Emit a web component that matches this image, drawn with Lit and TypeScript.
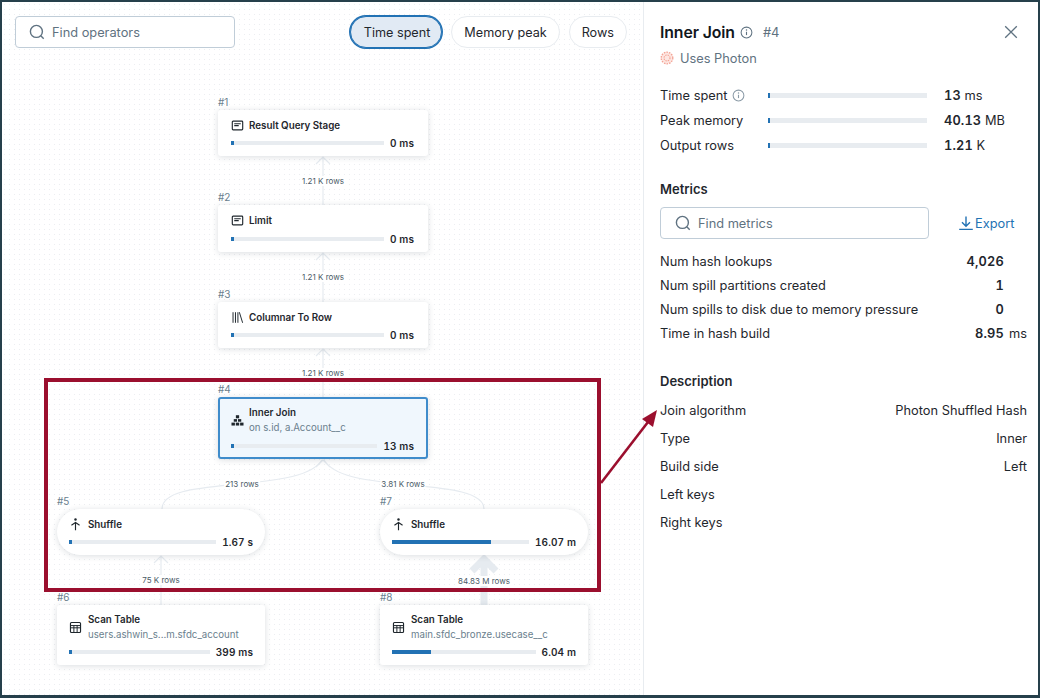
import { LitElement, html, css, svg } from "lit";
import { customElement } from "lit/decorators.js";

type Kind = "doc" | "cols" | "join" | "run" | "table";
interface OpNode { id: number; x: number; y: number; w: number; h: number; title: string; sub?: string; value: string; fill: number; icon: Kind; pill?: boolean; sel?: boolean; low?: boolean; }

const nodes: OpNode[] = [
  { id: 1, x: 218, y: 110, w: 210, h: 46, title: "Result Query Stage", value: "0 ms", fill: 2, icon: "doc" },
  { id: 2, x: 218, y: 205, w: 210, h: 47, title: "Limit", value: "0 ms", fill: 2, icon: "doc" },
  { id: 3, x: 218, y: 302, w: 210, h: 46, title: "Columnar To Row", value: "0 ms", fill: 2, icon: "cols" },
  { id: 4, x: 218, y: 397, w: 210, h: 62, title: "Inner Join", sub: "on s.id, a.Account__c", value: "13 ms", fill: 2, icon: "join", sel: true },
  { id: 5, x: 57, y: 509, w: 208, h: 46, title: "Shuffle", value: "1.67 s", fill: 2, icon: "run", pill: true, low: true },
  { id: 7, x: 380, y: 509, w: 208, h: 46, title: "Shuffle", value: "16.07 m", fill: 72.5, icon: "run", pill: true, low: true },
  { id: 6, x: 57, y: 605, w: 208, h: 60, title: "Scan Table", sub: "users.ashwin_s...m.sfdc_account", value: "399 ms", fill: 2, icon: "table", low: true },
  { id: 8, x: 380, y: 605, w: 208, h: 60, title: "Scan Table", sub: "main.sfdc_bronze.usecase__c", value: "6.04 m", fill: 27, icon: "table", low: true },
];

const edgeLabels = [
  { t: "1.21 K rows", x: 323, y: 181 },
  { t: "1.21 K rows", x: 323, y: 277 },
  { t: "1.21 K rows", x: 323, y: 373 },
  { t: "213 rows", x: 242, y: 484 },
  { t: "3.81 K rows", x: 403, y: 484 },
  { t: "75 K rows", x: 161, y: 580 },
  { t: "84.83 M rows", x: 484, y: 581 },
];

const icons: Record<Kind, unknown> = {
  doc: svg`<rect x="1.6" y="2.6" width="12.8" height="10.8" rx="1" fill="none" stroke="currentColor" stroke-width="1.4"/><path d="M4 5.8h8M4 8.2h5.5" stroke="currentColor" stroke-width="1.4" fill="none"/>`,
  cols: svg`<path d="M2.5 1.5v13M5.5 1.5v13M8.5 1.5v13M10.3 1.5l4 13" stroke="currentColor" stroke-width="1.2" fill="none"/>`,
  join: svg`<rect x="6" y="1.5" width="4" height="3.8" fill="currentColor"/><rect x="3.4" y="6.3" width="4" height="3.2" fill="currentColor"/><rect x="8.6" y="6.3" width="4" height="3.2" fill="currentColor"/><rect x="0.6" y="10.6" width="4.2" height="3.6" fill="currentColor"/><rect x="5.9" y="10.6" width="4.2" height="3.6" fill="currentColor"/><rect x="11.2" y="10.6" width="4.2" height="3.6" fill="currentColor"/>`,
  run: svg`<circle cx="8" cy="1.9" r="1.5" fill="currentColor"/><path d="M8 15V5.6M3 8.8l5-3.2 5 3.2" stroke="currentColor" stroke-width="1.4" fill="none"/>`,
  table: svg`<rect x="1.8" y="1.8" width="12.4" height="12.4" rx="1.2" fill="none" stroke="currentColor" stroke-width="1.4"/><path d="M2 5.6h12M2 8.4h12M6 5.6v8.4M10 5.6v8.4" stroke="currentColor" stroke-width="1.2" fill="none"/>`,
};

const searchIcon = html`<svg class="search" viewBox="0 0 16 16" width="16" height="16"><circle cx="7.4" cy="7.4" r="6" fill="none" stroke="#5f7281" stroke-width="1.4"/><path d="M11.8 11.8l2.9 2.9" stroke="#5f7281" stroke-width="1.4" fill="none"/></svg>`;
const infoIcon = (c: string) => html`<svg viewBox="0 0 14 14" width="13" height="13"><circle cx="7" cy="7" r="5.8" fill="none" stroke=${c} stroke-width="1.1"/><path d="M7 6.2v3.6" stroke=${c} stroke-width="1.2"/><circle cx="7" cy="4.3" r=".8" fill=${c}/></svg>`;

@customElement("op-node")
class OpNodeEl extends LitElement {
  static properties = { node: { attribute: false } };
  node!: OpNode;
  static styles = css`
    :host { display: contents; }
    .num { position: absolute; font-size: 10px; line-height: 12px; color: #6b7f8e; }
    .card { position: absolute; box-sizing: border-box; background: #fff; border-radius: 3px; box-shadow: 0 1px 6px rgba(30, 50, 70, 0.16); display: flex; flex-direction: column; padding: 4px 14px 0 13px; }
    .card.low { padding-left: 12px; padding-right: 12px; }
    .card.low .head { gap: 6px; }
    .card.pill { border-radius: 24px; }
    .card.sel { background: #f0f7fd; border: 2px solid #3f8ccb; padding: 2px 12px 0 11px; }
    .head { flex: 1; display: flex; align-items: center; gap: 5px; min-height: 0; color: #1f272d; }
    .head svg { flex: none; }
    .txt { display: flex; flex-direction: column; gap: 2px; }
    .title { font-size: 9.8px; line-height: 13px; font-weight: 600; color: #1f272d; white-space: nowrap; }
    .sub { font-size: 9.7px; line-height: 13px; color: #6b7f8e; white-space: nowrap; }
    .foot { display: flex; align-items: center; gap: 6px; height: 13px; margin-bottom: 7px; }
    .track { flex: 1; height: 4px; background: #e8ecf0; }
    .fill { height: 100%; background: #2272b4; min-width: 2px; }
    .val { font-size: 10px; font-weight: 600; color: #1f272d; white-space: nowrap; letter-spacing: 0.1px; font-variant-numeric: tabular-nums; }
    .card.sel .foot { margin-bottom: 5px; }
  `;
  render() {
    const n = this.node;
    const cls = `card${n.low ? " low" : ""}${n.pill ? " pill" : ""}${n.sel ? " sel" : ""}`;
    return html`
      <div class="num" style="left:${n.x}px;top:${n.y - 14}px">#${n.id}</div>
      <div class=${cls} style="left:${n.x}px;top:${n.y}px;width:${n.w}px;height:${n.h}px">
        <div class="head">
          <svg viewBox="0 0 16 16" width="13" height="13">${icons[n.icon]}</svg>
          <div class="txt"><div class="title">${n.title}</div>${n.sub ? html`<div class="sub">${n.sub}</div>` : null}</div>
        </div>
        <div class="foot"><div class="track"><div class="fill" style="width:${n.fill}%"></div></div><div class="val">${n.value}</div></div>
      </div>`;
  }
}

@customElement("app-root")
class AppRoot extends LitElement {
  static styles = css`
    :host { display: block; width: 1040px; height: 698px; font-family: Inter, "Liberation Sans", sans-serif; color: #1f272d; }
    .frame { position: relative; box-sizing: border-box; width: 1040px; height: 698px; border: 2px solid #26404b; border-bottom-width: 3px; background: #fff; display: flex; overflow: hidden; }
    .canvas { width: 641px; flex: none; background-color: #fff; background-image: radial-gradient(#eceef1 0.7px, transparent 0.8px); background-size: 5px 5px; }
    .toolbar { display: flex; justify-content: space-between; align-items: center; padding: 14px 16px 0 13px; position: relative; z-index: 2; }
    .input { box-sizing: border-box; height: 32px; border: 1px solid #c0cdd8; border-radius: 4px; background: #fff; display: flex; align-items: center; gap: 7px; padding: 0 13px; font-size: 12.8px; color: #5f7281; }
    .input.op { width: 220px; }
    .input.met { width: 269px; padding: 0 14px; }
    .tabs { display: flex; gap: 9px; }
    .tab { box-sizing: border-box; height: 32px; border: 1px solid #e8ecf0; border-radius: 16px; background: #fff; display: flex; align-items: center; padding: 0 12px; font-size: 12.65px; color: #1f272d; white-space: nowrap; }
    .tab.on { background: #e1eaf4; border-color: #2272b4; box-shadow: 0 0 0 1px #2272b4; padding: 0 11px 0 13px; }
    .stage { position: absolute; left: -2px; top: -2px; width: 1042px; height: 698px; pointer-events: none; }
    .edges { position: absolute; left: 0; top: 0; }
    .elabel { position: absolute; transform: translate(-50%, -50%); font-size: 8px; line-height: 10px; color: #4a5a66; background: #fff; padding: 0 1px; white-space: nowrap; }
    .redbox { position: absolute; left: 44px; top: 378px; width: 557px; height: 214px; box-sizing: border-box; border: 4px solid #9b0f2e; }
    .over { position: absolute; left: 0; top: 0; z-index: 3; }

    .panel { flex: 1; min-width: 0; box-sizing: border-box; border-left: 1px solid #e8ecf0; padding: 18px 11px 0 16px; font-size: 12.8px; display: flex; flex-direction: column; background: #fff; }
    .ptitle { display: flex; align-items: center; height: 24px; }
    .ptitle h1 { margin: 0; font-size: 15.8px; font-weight: 600; color: #11171c; letter-spacing: -0.1px; }
    .info { display: flex; margin-left: 5px; }
    .ptitle .hash { margin-left: 10px; color: #5f7281; font-size: 13px; }
    .close { margin-left: auto; margin-right: 9px; }
    .photon { display: flex; align-items: center; gap: 6px; height: 20px; margin-top: 4px; color: #5f7281; }
    .stats { margin-top: 15px; display: flex; flex-direction: column; }
    .stat { display: grid; grid-template-columns: 108px 159px auto; align-items: center; height: 25px; }
    .lab { display: flex; align-items: center; gap: 5px; white-space: nowrap; color: #1f272d; }
    .sbar { height: 5px; background: #e8ecf0; }
    .sbar div { width: 2px; height: 100%; background: #2272b4; }
    .sval { padding-left: 17px; white-space: nowrap; }
    .sval b { font-weight: 600; font-variant-numeric: tabular-nums; letter-spacing: 0.15px; }
    h2 { margin: 0; font-size: 13px; line-height: 20px; font-weight: 600; color: #1f272d; }
    .mh { margin-top: 21px; }
    .msearch { display: flex; align-items: center; margin-top: 8px; }
    .export { margin-left: 30px; display: flex; align-items: center; gap: 2px; color: #2272b4; }
    .mrows { margin-top: 10px; display: flex; flex-direction: column; }
    .mrow { display: flex; justify-content: space-between; align-items: center; height: 24px; white-space: nowrap; }
    .numv { display: flex; }
    .numv b { font-weight: 600; font-variant-numeric: tabular-nums; letter-spacing: 0.2px; }
    .unit { width: 23px; text-align: right; }
    .dh { margin-top: 26px; }
    .drows { margin-top: 5px; display: flex; flex-direction: column; }
    .drow { display: flex; justify-content: space-between; align-items: center; height: 28px; white-space: nowrap; }
  `;

  render() {
    const metrics = [
      ["Num hash lookups", "4,026", ""],
      ["Num spill partitions created", "1", ""],
      ["Num spills to disk due to memory pressure", "0", ""],
      ["Time in hash build", "8.95", "ms"],
    ];
    const desc = [["Join algorithm", "Photon Shuffled Hash"], ["Type", "Inner"], ["Build side", "Left"], ["Left keys", ""], ["Right keys", ""]];
    const stats = [["Time spent", "13", "ms", true], ["Peak memory", "40.13", "MB", false], ["Output rows", "1.21", "K", false]] as const;
    const e = "#e6ebf0";
    return html`
      <div class="frame">
        <div class="canvas">
          <div class="toolbar">
            <div class="input op">${searchIcon}<span>Find operators</span></div>
            <div class="tabs">
              <div class="tab on">Time spent</div>
              <div class="tab">Memory peak</div>
              <div class="tab">Rows</div>
            </div>
          </div>
        </div>
        <div class="panel">
          <div class="ptitle">
            <h1>Inner Join</h1>
            <span class="info">${infoIcon("#5f7281")}</span>
            <span class="hash">#4</span>
            <svg class="close" viewBox="0 0 14 14" width="14" height="14"><path d="M1.2 1.2l11.6 11.6M12.8 1.2L1.2 12.8" stroke="#5f7281" stroke-width="1.3" fill="none"/></svg>
          </div>
          <div class="photon">
            <svg viewBox="0 0 14 14" width="14" height="14"><circle cx="7" cy="7" r="5.8" fill="#fde6e1" stroke="#f3a294" stroke-width="1.3" stroke-dasharray="1.6 1"/><circle cx="7" cy="7" r="3" fill="none" stroke="#f3a294" stroke-width="1.1" stroke-dasharray="1.4 1"/></svg>
            <span>Uses Photon</span>
          </div>
          <div class="stats">
            ${stats.map(([l, v, u, info]) => html`<div class="stat">
              <div class="lab">${l}${info ? infoIcon("#8a9aa6") : null}</div>
              <div class="sbar"><div></div></div>
              <div class="sval"><b>${v}</b> ${u}</div>
            </div>`)}
          </div>
          <h2 class="mh">Metrics</h2>
          <div class="msearch">
            <div class="input met">${searchIcon}<span>Find metrics</span></div>
            <div class="export">
              <svg viewBox="0 0 14 16" width="14" height="16"><path d="M7 1.5v9.5M3 7.2L7 11.2l4-4M0.2 14.4h13.6" stroke="#2272b4" stroke-width="1.4" fill="none"/></svg>
              <span>Export</span>
            </div>
          </div>
          <div class="mrows">
            ${metrics.map(([l, v, u]) => html`<div class="mrow"><span>${l}</span><span class="numv"><b>${v}</b><span class="unit">${u}</span></span></div>`)}
          </div>
          <h2 class="dh">Description</h2>
          <div class="drows">
            ${desc.map(([l, v]) => html`<div class="drow"><span>${l}</span><span>${v}</span></div>`)}
          </div>
        </div>
        <div class="stage">
          <svg class="edges" width="1042" height="698" viewBox="0 0 1042 698">
            <g fill="none" stroke=${e} stroke-width="1.2">
              <path d="M323 205V157M316 164l7-7 7 7"/>
              <path d="M323 302V253M316 260l7-7 7 7"/>
              <path d="M323 397V349M316 356l7-7 7 7"/>
              <path d="M162 509C162 490 200 488 240 484C280 480 312 476 322 460"/>
              <path d="M484 509C484 490 440 488 400 484C362 480 334 476 324 460M316 467l7-7 7 7"/>
              <path d="M161 605V556M154 563l7-7 7 7"/>
            </g>
            <g fill="none" stroke=${e} stroke-width="7"><path d="M484 605V559M472 571l12-12 12 12"/></g>
          </svg>
          ${edgeLabels.map((l) => html`<div class="elabel" style="left:${l.x}px;top:${l.y}px">${l.t}</div>`)}
          ${nodes.map((n) => html`<op-node .node=${n}></op-node>`)}
          <div class="redbox"></div>
          <svg class="over" width="1042" height="698" viewBox="0 0 1042 698">
            <path d="M601 483L648 422" stroke="#9b0f2e" stroke-width="2.6" fill="none"/>
            <path d="M657 410L642 419L653 427Z" fill="#9b0f2e"/>
          </svg>
        </div>
      </div>`;
  }
}
